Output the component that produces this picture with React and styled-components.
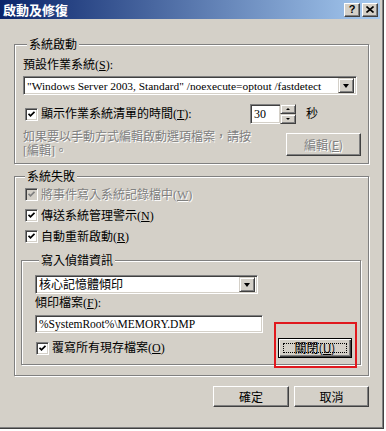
import React from 'react'
import styled, { createGlobalStyle } from 'styled-components'

const GlobalStyle = createGlobalStyle`
  html, body { margin: 0; padding: 0; background: #fff; }
  body {
    font-family: "Liberation Serif", "Noto Sans CJK TC", serif;
    font-size: 12px;
    color: #000;
  }
`

//-----*-----*-----*-----*-----*-----//

const Window = styled.div`
  position: relative;
  box-sizing: border-box;
  width: 384px;
  height: 429px;
  background: #d4d0c8;
  border-right: 1px solid #404040;
  border-bottom: 1px solid #404040;
  box-shadow: inset -1px -1px 0 #808080;
  padding: 0 3px 3px 0;
  display: flex;
  flex-direction: column;
`

const TitleBar = styled.div`
  height: 19px;
  display: flex;
  align-items: center;
  background: linear-gradient(to right, #0a246a, #a6caf0);
  padding: 0 2px 0 3px;
`

const TitleText = styled.div`
  flex: 1;
  color: #fff;
  font-family: "Noto Sans CJK TC", sans-serif;
  font-weight: bold;
  font-size: 13px;
  line-height: 15px;
`

const TitleButton = styled.div`
  box-sizing: border-box;
  width: 16px;
  height: 14px;
  margin-left: 2px;
  background: #d4d0c8;
  border: 1px solid;
  border-color: #fff #404040 #404040 #fff;
  box-shadow: inset -1px -1px 0 #808080;
  display: flex;
  align-items: center;
  justify-content: center;
  font-family: "Liberation Sans", sans-serif;
  font-weight: bold;
  font-size: 11px;
  line-height: 11px;
`

const Body = styled.div`
  padding: 0 11px 0 14px;
  display: flex;
  flex-direction: column;
`

const Group = styled.fieldset`
  margin: ${p => p.$top}px 0 0;
  padding: 0 ${p => p.$padR || 0}px ${p => p.$padB}px ${p => p.$padL}px;
  border: 1px solid #808080;
  box-shadow: inset 1px 1px 0 #fff, 1px 1px 0 #fff;
  min-width: 0;
  display: flex;
  flex-direction: column;
`

const Legend = styled.legend`
  margin-left: 4px;
  padding: 0 2px;
  line-height: 14px;
  background: #d4d0c8;
  font-family: "Noto Sans CJK TC", sans-serif;
`

const Label = styled.div`
  margin-top: ${p => p.$top || 0}px;
  margin-left: ${p => p.$left || 0}px;
  line-height: 14px;
  white-space: nowrap;
  color: ${p => (p.$disabled ? '#808080' : '#000')};
  text-shadow: ${p => (p.$disabled ? '1px 1px 0 #fff' : 'none')};
`

const Sunken = styled.div`
  box-sizing: border-box;
  width: ${p => p.$w}px;
  height: ${p => p.$h || 19}px;
  margin-top: ${p => p.$top || 0}px;
  background: #fff;
  border: 1px solid;
  border-color: #808080 #fff #fff #808080;
  box-shadow: inset 1px 1px 0 #404040, inset -1px -1px 0 #d4d0c8;
  display: flex;
  align-items: center;
  padding: 0 2px 0 3px;
  white-space: nowrap;
  overflow: hidden;
`

const FieldText = styled.div`
  flex: 1;
  font-size: ${p => p.$size || 12}px;
  line-height: 14px;
  overflow: hidden;
`

const ArrowButton = styled.div`
  box-sizing: border-box;
  width: 16px;
  height: ${p => p.$h || 15}px;
  background: #d4d0c8;
  border: 1px solid;
  border-color: #d4d0c8 #404040 #404040 #d4d0c8;
  box-shadow: inset 1px 1px 0 #fff, inset -1px -1px 0 #808080;
  display: flex;
  align-items: center;
  justify-content: center;
`

const Triangle = styled.div`
  width: 0;
  height: 0;
  border-left: ${p => p.$size || 3.5}px solid transparent;
  border-right: ${p => p.$size || 3.5}px solid transparent;
  ${p => (p.$up ? 'border-bottom' : 'border-top')}: ${p => (p.$size ? p.$size : 4)}px solid #000;
`

const Row = styled.div`
  display: flex;
  align-items: ${p => p.$align || 'center'};
  height: ${p => (p.$h ? `${p.$h}px` : 'auto')};
  margin-top: ${p => p.$top || 0}px;
  margin-left: ${p => p.$left || 0}px;
`

const CheckItem = styled.div`
  display: flex;
  align-items: center;
  width: ${p => (p.$w ? `${p.$w}px` : 'auto')};
`

const Box = styled.span`
  box-sizing: border-box;
  width: 13px;
  height: 13px;
  margin-right: 3px;
  background: ${p => (p.$disabled ? '#d4d0c8' : '#fff')};
  border: 1px solid;
  border-color: #808080 #fff #fff #808080;
  box-shadow: inset 1px 1px 0 #404040, inset -1px -1px 0 #d4d0c8;
  display: flex;
  align-items: center;
  justify-content: center;
`

const Spin = styled.div`
  display: flex;
  align-items: center;
`

const SpinButtons = styled.div`
  display: flex;
  flex-direction: column;
  margin-left: -1px;
`

const Hint = styled.div`
  width: 252px;
  line-height: 14px;
  color: #808080;
  text-shadow: 1px 1px 0 #fff;
`

const Button = styled.div`
  box-sizing: border-box;
  width: ${p => p.$w}px;
  height: ${p => p.$h || 21}px;
  margin: ${p => p.$m || '0'};
  background: #d4d0c8;
  border: 1px solid;
  border-color: ${p => (p.$default ? '#000' : '#fff #404040 #404040 #fff')};
  box-shadow: ${p =>
    p.$default
      ? 'inset 1px 1px 0 #fff, inset -1px -1px 0 #404040, inset -2px -2px 0 #808080'
      : 'inset -1px -1px 0 #808080'};
  display: flex;
  align-items: center;
  justify-content: center;
  font-family: "Noto Sans CJK TC", sans-serif;
  line-height: 14px;
  color: ${p => (p.$disabled ? '#808080' : '#000')};
  text-shadow: ${p => (p.$disabled ? '1px 1px 0 #fff' : 'none')};
`

const Focus = styled.div`
  box-sizing: border-box;
  width: calc(100% - 8px);
  height: calc(100% - 8px);
  border: 1px dotted #000;
  display: flex;
  align-items: center;
  justify-content: center;
`

const Footer = styled.div`
  display: flex;
  justify-content: flex-end;
  gap: 5px;
  margin-top: 10px;
`

const Highlight = styled.div`
  position: absolute;
  left: 274px;
  top: 322px;
  width: 83px;
  height: 46px;
  box-sizing: border-box;
  border: 2px solid #e0191e;
`

//-----*-----*-----*-----*-----*-----//

const Check = ({ disabled }) => (
  <Box $disabled={disabled}>
    <svg width="7" height="7" viewBox="0 0 7 7">
      <path d="M0.5 2.8 L2.5 4.8 L6.5 0.8" fill="none" stroke={disabled ? '#808080' : '#000'} strokeWidth="1.8" />
    </svg>
  </Box>
)

const Combo = ({ w, h, top, size, children }) => (
  <Sunken $w={w} $h={h} $top={top}>
    <FieldText $size={size}>{children}</FieldText>
    <ArrowButton $h={h - 4}>
      <Triangle />
    </ArrowButton>
  </Sunken>
)

const Key = ({ k }) => (
  <>
    (<u>{k}</u>)
  </>
)

const App = () => (
  <>
    <GlobalStyle />
    <Window>
      <TitleBar>
        <TitleText>啟動及修復</TitleText>
        <TitleButton>?</TitleButton>
        <TitleButton>
          <svg width="8" height="7" viewBox="0 0 8 7">
            <path d="M0.5 0.5 L7.5 6.5 M7.5 0.5 L0.5 6.5" stroke="#000" strokeWidth="1.6" />
          </svg>
        </TitleButton>
      </TitleBar>

      <Body>
        <Group $top={18} $padL={8} $padB={5}>
          <Legend>系統啟動</Legend>
          <Label $top={7}>預設作業系統<Key k="S" />:</Label>
          <Combo w={334} h={19} top={4} size={11.4}>
            "Windows Server 2003, Standard" /noexecute=optout /fastdetect
          </Combo>

          <Row $top={9} $h={20} $left={2}>
            <CheckItem $w={225}>
              <Check />
              <Label>顯示作業系統清單的時間<Key k="T" />:</Label>
            </CheckItem>
            <Spin>
              <Sunken $w={31} $h={20}>
                <FieldText>30</FieldText>
              </Sunken>
              <SpinButtons>
                <ArrowButton $h={10}>
                  <Triangle $up $size={2} />
                </ArrowButton>
                <ArrowButton $h={10}>
                  <Triangle $size={2} />
                </ArrowButton>
              </SpinButtons>
            </Spin>
            <Label $left={10}>秒</Label>
          </Row>

          <Row $top={6} $align="flex-start">
            <Hint>
              如果要以手動方式編輯啟動選項檔案，請按
              <br />
              [編輯]。
            </Hint>
            <Button $w={75} $h={23} $m="3px 7px 0 auto" $disabled>
              編輯<Key k="E" />
            </Button>
          </Row>
        </Group>

        <Group $top={5} $padL={6} $padR={7} $padB={10}>
          <Legend>系統失敗</Legend>
          <Row $h={21} $top={1} $left={4}>
            <Check disabled />
            <Label $disabled>將事件寫入系統記錄檔中<Key k="W" /></Label>
          </Row>
          <Row $h={21} $left={4}>
            <Check />
            <Label>傳送系統管理警示<Key k="N" /></Label>
          </Row>
          <Row $h={21} $left={4}>
            <Check />
            <Label>自動重新啟動<Key k="R" /></Label>
          </Row>

          <Group $top={6} $padL={13} $padB={6}>
            <Legend>寫入偵錯資訊</Legend>
            <Combo w={223} h={19} top={8}>核心記憶體傾印</Combo>
            <Label $top={2}>傾印檔案<Key k="F" />:</Label>
            <Sunken $w={228} $h={18} $top={5}>
              <FieldText $size={11.5}>%SystemRoot%\MEMORY.DMP</FieldText>
            </Sunken>
            <Row $top={5} $h={20} $left={1}>
              <Check />
              <Label>覆寫所有現存檔案<Key k="O" /></Label>
              <Button $w={74} $h={20} $m="0 8px 0 auto" $default>
                <Focus>關閉<Key k="U" /></Focus>
              </Button>
            </Row>
          </Group>
        </Group>

        <Footer>
          <Button $w={76}>確定</Button>
          <Button $w={75}>取消</Button>
        </Footer>
      </Body>

      <Highlight />
    </Window>
  </>
)

export default App
